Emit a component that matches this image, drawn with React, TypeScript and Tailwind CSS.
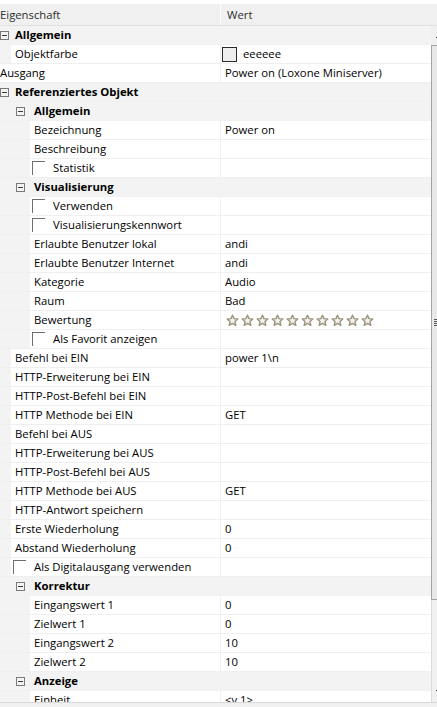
import type { ReactNode } from "react";

type Row = {
  t: "cat" | "prop" | "check";
  l: 0 | 1 | 2;
  label: string;
  v?: ReactNode;
};

function Star() {
  return (
    <svg width="13" height="13" viewBox="0 0 24 24">
      <path
        d="M12 2.2l2.9 6.4 6.9.7-5.2 4.7 1.5 6.9L12 17.3l-6.1 3.6 1.5-6.9-5.2-4.7 6.9-.7z"
        fill="#f3f1ec"
        stroke="#9d947f"
        strokeWidth="2.6"
        strokeLinejoin="round"
      />
    </svg>
  );
}

function Stars() {
  return (
    <div className="flex items-center gap-[2px] pl-[1px]">
      {Array.from({ length: 10 }).map((_, i) => (
        <Star key={i} />
      ))}
    </div>
  );
}

function ColorValue() {
  return (
    <div className="flex items-center gap-[6px] -ml-[3px]">
      <span className="w-[15px] h-[15px] border border-[#2b2b2b] bg-[#eeeeee]" />
      <span>eeeeee</span>
    </div>
  );
}

const rows: Row[] = [
  { t: "cat", l: 0, label: "Allgemein" },
  { t: "prop", l: 1, label: "Objektfarbe", v: <ColorValue /> },
  { t: "prop", l: 0, label: "Ausgang", v: "Power on (Loxone Miniserver)" },
  { t: "cat", l: 0, label: "Referenziertes Objekt" },
  { t: "cat", l: 1, label: "Allgemein" },
  { t: "prop", l: 2, label: "Bezeichnung", v: "Power on" },
  { t: "prop", l: 2, label: "Beschreibung" },
  { t: "check", l: 2, label: "Statistik" },
  { t: "cat", l: 1, label: "Visualisierung" },
  { t: "check", l: 2, label: "Verwenden" },
  { t: "check", l: 2, label: "Visualisierungskennwort" },
  { t: "prop", l: 2, label: "Erlaubte Benutzer lokal", v: "andi" },
  { t: "prop", l: 2, label: "Erlaubte Benutzer Internet", v: "andi" },
  { t: "prop", l: 2, label: "Kategorie", v: "Audio" },
  { t: "prop", l: 2, label: "Raum", v: "Bad" },
  { t: "prop", l: 2, label: "Bewertung", v: <Stars /> },
  { t: "check", l: 2, label: "Als Favorit anzeigen" },
  { t: "prop", l: 1, label: "Befehl bei EIN", v: "power 1\\n" },
  { t: "prop", l: 1, label: "HTTP-Erweiterung bei EIN" },
  { t: "prop", l: 1, label: "HTTP-Post-Befehl bei EIN" },
  { t: "prop", l: 1, label: "HTTP Methode bei EIN", v: "GET" },
  { t: "prop", l: 1, label: "Befehl bei AUS" },
  { t: "prop", l: 1, label: "HTTP-Erweiterung bei AUS" },
  { t: "prop", l: 1, label: "HTTP-Post-Befehl bei AUS" },
  { t: "prop", l: 1, label: "HTTP Methode bei AUS", v: "GET" },
  { t: "prop", l: 1, label: "HTTP-Antwort speichern" },
  { t: "prop", l: 1, label: "Erste Wiederholung", v: "0" },
  { t: "prop", l: 1, label: "Abstand Wiederholung", v: "0" },
  { t: "check", l: 1, label: "Als Digitalausgang verwenden" },
  { t: "cat", l: 1, label: "Korrektur" },
  { t: "prop", l: 2, label: "Eingangswert 1", v: "0" },
  { t: "prop", l: 2, label: "Zielwert 1", v: "0" },
  { t: "prop", l: 2, label: "Eingangswert 2", v: "10" },
  { t: "prop", l: 2, label: "Zielwert 2", v: "10" },
  { t: "cat", l: 1, label: "Anzeige" },
  { t: "prop", l: 2, label: "Einheit", v: "<v.1>" },
];

// white part of the name cell starts at these offsets
const whiteStart = ["ml-0", "ml-[11px]", "ml-[30px]"];
const textPad = ["pl-0", "pl-[4px]", "pl-[4px]"];
const catBox = ["ml-0", "ml-[16px]", "ml-[16px]"];
const catText = ["ml-[6px]", "ml-[9px]", "ml-[9px]"];

function Collapse({ l }: { l: number }) {
  return (
    <span
      className={`${catBox[l]} relative w-[9px] h-[9px] border border-[#7a7a7a] shrink-0`}
    >
      <span className="absolute left-[1px] right-[1px] top-[3px] h-px bg-[#3c3c3c]" />
    </span>
  );
}

function Checkbox() {
  return (
    <span className="ml-[2px] mt-[2px] self-start w-[13px] h-[14px] border-t border-l border-[#6e6e6e] shrink-0" />
  );
}

function GridRow({ r }: { r: Row }) {
  if (r.t === "cat") {
    return (
      <div className="flex items-center h-[19px] shrink-0 bg-[#f3f3f3] border-b border-[#f0f0f0]">
        <Collapse l={r.l} />
        <span className={`${catText[r.l]} font-bold`}>{r.label}</span>
      </div>
    );
  }
  return (
    <div className="flex h-[19px] shrink-0 border-b border-[#efefef]">
      <div className="w-[220px] flex bg-[#f3f3f3] shrink-0">
        <div className={`${whiteStart[r.l]} flex-1 flex items-center bg-white whitespace-nowrap`}>
          {r.t === "check" ? (
            <>
              <Checkbox />
              <span className="ml-[8px]">{r.label}</span>
            </>
          ) : (
            <span className={textPad[r.l]}>{r.label}</span>
          )}
        </div>
      </div>
      <div className="w-px bg-[#f0f0f0] shrink-0" />
      <div className="flex-1 flex items-center bg-white pl-[4px] whitespace-nowrap">{r.v}</div>
    </div>
  );
}

function Scrollbar() {
  return (
    <div className="w-[6px] flex flex-col bg-[#f0f0f0]">
      <div className="h-[19px] relative shrink-0">
        <span className="absolute left-[5px] top-[11px] w-px h-px bg-[#333]" />
      </div>
      <div className="h-[555px] shrink-0 bg-[#e8e8e8] border-l border-t border-b border-[#a3a3a3] flex flex-col justify-center items-end gap-[1px]">
        <span className="w-[3px] h-px bg-[#555]" />
        <span className="w-[3px] h-px bg-[#555]" />
        <span className="w-[3px] h-px bg-[#555]" />
        <span className="w-[3px] h-px bg-[#555]" />
      </div>
      <div className="flex-1 border-l border-[#dcdcdc] relative">
        <span className="absolute left-[4px] bottom-[11px] w-px h-px bg-[#333]" />
      </div>
    </div>
  );
}

export default function App() {
  return (
    <div className="w-[437px] h-[707px] overflow-hidden bg-white flex flex-col text-[11.3px] leading-none text-black font-['Open_Sans',sans-serif]">
      <div className="h-[4px] bg-white shrink-0" />
      {/* header */}
      <div className="h-[22px] flex bg-[#f0f0f0] border-b border-[#e2e2e2] text-[#2d2d2d] shrink-0">
        <div className="w-[220px] flex items-center">Eigenschaft</div>
        <div className="w-px bg-white" />
        <div className="flex-1 flex items-center pl-[6px]">Wert</div>
      </div>
      {/* body */}
      <div className="h-[676px] flex overflow-hidden shrink-0">
        <div className="w-[431px] flex flex-col">
          {rows.map((r, i) => (
            <GridRow key={i} r={r} />
          ))}
        </div>
        <Scrollbar />
      </div>
      <div className="h-px bg-[#d8d8d8] shrink-0" />
      <div className="flex-1 bg-[#f0f0f0]" />
    </div>
  );
}
